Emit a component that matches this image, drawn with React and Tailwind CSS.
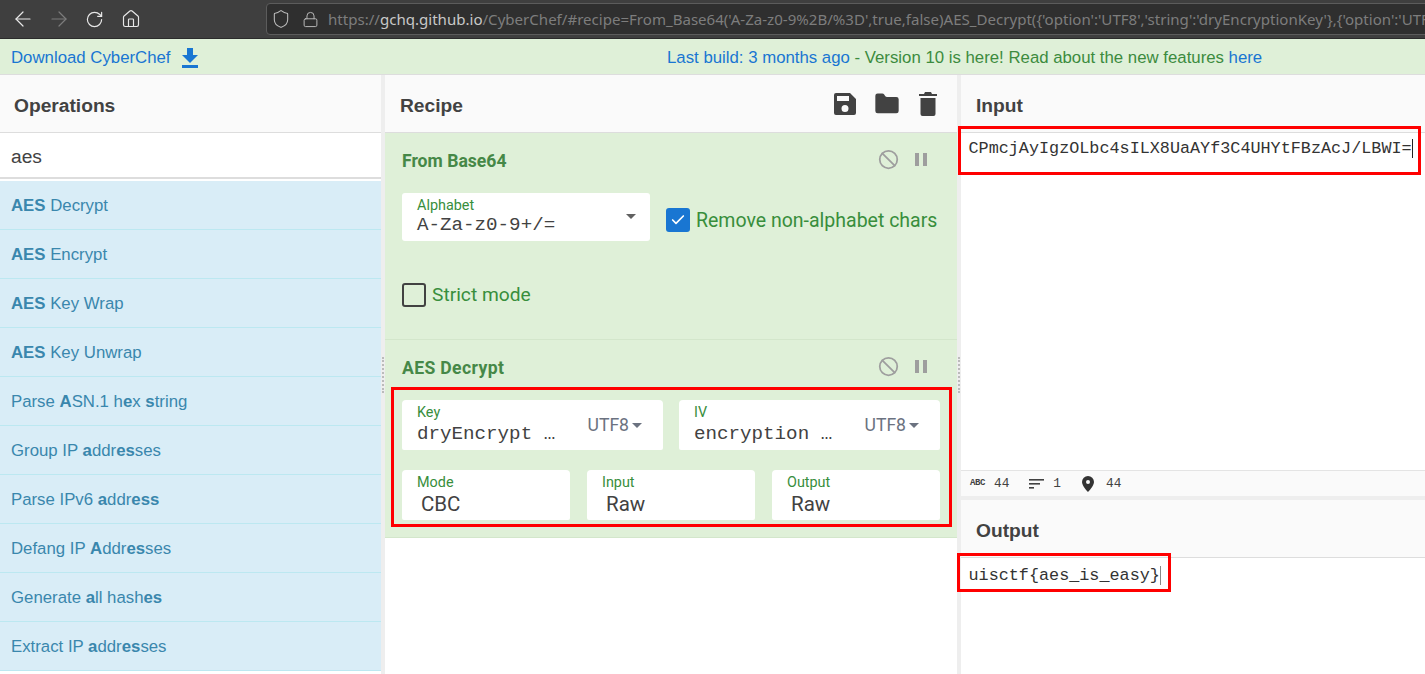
import { Folder, ArrowLeft, ArrowRight, RotateCw, Home, Shield, Lock, Check, Ban } from "lucide-react"

const operations = [
    [["AES", 1], [" Decrypt", 0]],
    [["AES", 1], [" Encrypt", 0]],
    [["AES", 1], [" Key Wrap", 0]],
    [["AES", 1], [" Key Unwrap", 0]],
    [["Parse ", 0], ["A", 1], ["SN.1 h", 0], ["e", 1], ["x ", 0], ["s", 1], ["tring", 0]],
    [["Group IP ", 0], ["a", 1], ["ddr", 0], ["es", 1], ["ses", 0]],
    [["Parse IPv6 ", 0], ["a", 1], ["ddr", 0], ["ess", 1]],
    [["Defang IP ", 0], ["A", 1], ["ddr", 0], ["es", 1], ["ses", 0]],
    [["Generate ", 0], ["a", 1], ["ll hash", 0], ["es", 1]],
    [["Extract IP ", 0], ["a", 1], ["ddr", 0], ["es", 1], ["ses", 0]],
]

const OpControls = () => (
    <div className="flex items-center gap-[16px] mr-[13px] -mt-[4px] text-[#9e9e9e]">
        <Ban size={21} strokeWidth={2} />
        <svg width="12" height="13" viewBox="0 0 12 13" fill="#9e9e9e">
            <rect x="0" y="0" width="4" height="13" />
            <rect x="8" y="0" width="4" height="13" />
        </svg>
    </div>
)

const Field = ({ label, value, mono, utf, className }) => (
    <div className={`relative h-[50px] bg-white rounded-t-[4px] rounded-b-[2px] pl-[15px] overflow-hidden ${className}`}>
        <div className="text-[14.4px] leading-[16px] pt-[5px] h-[20px] text-[#388e3c] font-['Roboto',sans-serif]">{label}</div>
        {mono ? (
            <div className="pt-[1px] text-[19.2px] leading-[26px] text-[#424242] font-['Liberation_Mono',monospace] whitespace-pre">{value}</div>
        ) : (
            <div className="pl-[4px] pt-[1px] text-[20.5px] leading-[26px] text-[#424242] font-['Roboto',sans-serif]">{value}</div>
        )}
        {utf && (
            <div className="absolute right-[21px] top-[15px] flex items-center gap-[3px] text-[17.6px] leading-[20px] text-[#6b7280] font-['Roboto',sans-serif]">
                UTF8
                <span className="w-0 h-0 border-x-[5px] border-x-transparent border-t-[5px] border-t-[#6b7280]" />
            </div>
        )}
    </div>
)

const App = () => {
    return (
        <div className="relative w-[1425px] h-[674px] overflow-hidden bg-white font-['Liberation_Sans',sans-serif]">
            {/* browser toolbar */}
            <div className="h-[39px] bg-[#3f3f3f] border-b border-[#2b2b2b] flex items-center pl-[11px] overflow-hidden">
                <ArrowLeft size={24} strokeWidth={1.2} className="text-[#e8e8e8] shrink-0" />
                <ArrowRight size={24} strokeWidth={1.2} className="text-[#7c7c7c] ml-[12px] shrink-0" />
                <RotateCw size={19} strokeWidth={1.5} className="text-[#e8e8e8] ml-[14px] shrink-0" />
                <Home size={20} strokeWidth={1.4} className="text-[#e8e8e8] ml-[17px] shrink-0" />
                <div className="ml-[125px] w-[1170px] h-[32px] shrink-0 rounded-[4px] bg-[#2f2f2f] border border-[#5c5c5c] flex items-center pl-[4px] whitespace-nowrap overflow-hidden text-[15.07px] font-['Noto_Sans',sans-serif]">
                    <Shield size={20} strokeWidth={1.3} className="text-[#b8b8b8] shrink-0" />
                    <Lock size={17} strokeWidth={1.4} className="text-[#b8b8b8] ml-[11px] shrink-0" />
                    <span className="ml-[9px] text-[#7d7d7d]">https://</span>
                    <span className="text-[#c8c8c8]">gchq.github.io</span>
                    <span className="text-[#7d7d7d]">/CyberChef/#recipe=From_Base64('A-Za-z0-9%2B/%3D',true,false)AES_Decrypt(&#123;'option':'UTF8','string':'dryEncryptionKey'&#125;,&#123;'option':'UTF8'</span>
                </div>
            </div>

            {/* banner */}
            <div className="h-[36px] bg-[#dff0d8] border-b border-[#dddddd] flex items-center pl-[11px] pt-[2px] text-[16.8px] relative">
                <span className="text-[#1976d2]">Download CyberChef</span>
                <svg width="16" height="20" viewBox="0 0 16 20" className="ml-[11px] text-[#1976d2]" fill="currentColor">
                    <path d="M5 0h6v7h5l-8 8-8-8h5z" />
                    <rect x="0" y="17" width="16" height="3" />
                </svg>
                <div className="absolute left-[667px] top-[9px] leading-[20px] whitespace-nowrap">
                    <span className="text-[#1976d2]">Last build: 3 months ago</span>
                    <span className="text-[#3c8b3e]"> - Version 10 is here! Read about the new features </span>
                    <span className="text-[#1976d2]">here</span>
                </div>
            </div>

            <div className="flex h-[599px] bg-[#eeeeee]">
                {/* operations */}
                <div className="w-[381px] shrink-0 bg-white overflow-hidden">
                    <div className="h-[58px] bg-[#fafafa] border-b border-[#dddddd] flex items-center pl-[14px] pt-[6px] text-[19.2px] font-bold text-[#424242]">
                        Operations
                    </div>
                    <div className="h-[46px] bg-white border-b-2 border-[#dddddd] flex items-center pl-[11px] pt-[4px] text-[19.2px] text-[#424242]">
                        aes
                    </div>
                    <div className="mt-[2px]">
                        {operations.map((parts, i) => (
                            <div key={i} className="h-[49px] bg-[#d9edf7] border-b border-[#bce8f1] flex items-center pl-[11px] pt-[2px] text-[16.8px] text-[#3a87ad] whitespace-pre">
                                {parts.map(([t, bold], j) => (
                                    <span key={j} className={bold ? "font-bold" : ""}>{t}</span>
                                ))}
                            </div>
                        ))}
                    </div>
                </div>

                {/* gutter */}
                <div className="w-[4px] shrink-0 flex items-center justify-center">
                    <div className="h-[36px] w-[2px] border-l-2 border-dotted border-[#bbbbbb]" />
                </div>

                {/* recipe */}
                <div className="w-[572px] shrink-0 bg-white">
                    <div className="h-[58px] bg-[#fafafa] border-b border-[#dddddd] flex items-center justify-between pl-[15px] pr-[20px] text-[19.2px] font-bold text-[#424242]">
                        <span className="pt-[6px]">Recipe</span>
                        <div className="flex items-center">
                            <svg width="24" height="24" viewBox="0 0 24 24" fill="#424242" className="mr-[16px]">
                                <path d="M17 1H3a2 2 0 0 0-2 2v18a2 2 0 0 0 2 2h18a2 2 0 0 0 2-2V7zm-5 19a3.5 3.5 0 1 1 0-7 3.5 3.5 0 0 1 0 7zm4-11H4V4h12z" />
                            </svg>
                            <Folder size={28} strokeWidth={0} fill="#424242" className="mr-[18px]" />
                            <svg width="18" height="24" viewBox="0 0 18 24" fill="#424242">
                                <path d="M1.500 6h15v16a2 2 0 0 1-2 2h-11a2 2 0 0 1-2-2zM0 2h5l1-2h6l1 2h5v2H0z" />
                            </svg>
                        </div>
                    </div>

                    <div className="h-[207px] bg-[#dff0d8] border-b border-[#d3e6cb] pl-[17px] pr-[17px] pt-[17px]">
                        <div className="flex items-center justify-between h-[22px] text-[#468847] text-[17.6px] font-bold font-['Roboto',sans-serif]">
                            <span className="pt-[1px]">From Base64</span>
                            <OpControls />
                        </div>
                        <div className="flex items-center mt-[21px]">
                            <div className="relative w-[248px] h-[48px] bg-white rounded-[3px] pl-[15px]">
                                <div className="text-[14.4px] leading-[16px] pt-[5px] h-[20px] text-[#388e3c] font-['Roboto',sans-serif]">Alphabet</div>
                                <div className="pt-[1px] text-[19.2px] leading-[22px] text-[#424242] font-['Liberation_Mono',monospace]">A-Za-z0-9+/=</div>
                                <span className="absolute right-[14px] top-[21px] w-0 h-0 border-x-[5px] border-x-transparent border-t-[5px] border-t-[#616161]" />
                            </div>
                            <div className="ml-[16px] mt-[6px] w-[24px] h-[24px] bg-[#1976d2] rounded-[3px] flex items-center justify-center">
                                <Check size={16} strokeWidth={2.5} className="text-white" />
                            </div>
                            <span className="ml-[6px] mt-[8px] text-[19.5px] text-[#388e3c] whitespace-nowrap font-['Roboto',sans-serif]">Remove non-alphabet chars</span>
                        </div>
                        <div className="flex items-center mt-[40px]">
                            <div className="w-[24px] h-[24px] border-2 border-[#424242] rounded-[3px]" />
                            <span className="ml-[6px] text-[19.2px] text-[#388e3c] font-['Roboto',sans-serif]">Strict mode</span>
                        </div>
                    </div>

                    <div className="h-[198px] bg-[#dff0d8] border-b border-[#d3e6cb] pl-[17px] pr-[17px] pt-[17px]">
                        <div className="flex items-center justify-between h-[22px] text-[#468847] text-[17.6px] font-bold font-['Roboto',sans-serif]">
                            <span className="pt-[1px] tracking-[0.35px]">AES Decrypt</span>
                            <OpControls />
                        </div>
                        <div className="flex gap-[16px] mt-[21px]">
                            <Field label="Key" value="dryEncrypt …" mono utf className="flex-1" />
                            <Field label="IV" value="encryption …" mono utf className="flex-1" />
                        </div>
                        <div className="flex gap-[17px] mt-[20px]">
                            <Field label="Mode" value="CBC" className="flex-1" />
                            <Field label="Input" value="Raw" className="flex-1" />
                            <Field label="Output" value="Raw" className="flex-1" />
                        </div>
                    </div>
                </div>

                {/* gutter */}
                <div className="w-[4px] shrink-0 flex items-center justify-center">
                    <div className="h-[36px] w-[2px] border-l-2 border-dotted border-[#bbbbbb]" />
                </div>

                {/* input / output */}
                <div className="flex-1 min-w-0 flex flex-col bg-white">
                    <div className="h-[58px] bg-[#fafafa] border-b border-[#dddddd] flex items-center pl-[15px] pt-[6px] text-[19.2px] font-bold text-[#424242]">
                        Input
                    </div>
                    <div className="h-[337px] pl-[7.5px] pt-[4px] text-[16.8px] leading-[24px] text-[#333333] font-['Liberation_Mono',monospace] whitespace-pre">
                        <span className="border-r border-[#222222]">CPmcjAyIgzOLbc4sILX8UaAYf3C4UHYtFBzAcJ/LBWI=</span>
                    </div>
                    <div className="h-[26px] bg-[#fafafa] border-t border-[#e4e4e4] flex items-center pl-[9px] text-[12.8px] text-[#424242] font-['Liberation_Mono',monospace]">
                        <span className="text-[9px] font-bold font-['Liberation_Mono',monospace] w-[15px] tracking-[-0.4px]">ABC</span>
                        <span className="ml-[9px]">44</span>
                        <svg width="16" height="14" viewBox="0 0 16 14" className="ml-[20px]" fill="#424242">
                            <rect x="0" y="2" width="15" height="1.6" />
                            <rect x="0" y="6" width="11" height="1.6" />
                            <rect x="0" y="10" width="5" height="1.6" />
                        </svg>
                        <span className="ml-[8px]">1</span>
                        <svg width="12" height="16" viewBox="0 0 12 16" className="ml-[21px]" fill="#333333">
                            <path fillRule="evenodd" d="M6 0a6 6 0 0 1 6 6c0 4-6 10-6 10S0 10 0 6a6 6 0 0 1 6-6zm0 4a2 2 0 1 0 0 4 2 2 0 0 0 0-4z" />
                        </svg>
                        <span className="ml-[12px]">44</span>
                    </div>
                    <div className="h-[4px] bg-[#eeeeee]" />
                    <div className="h-[58px] bg-[#fafafa] border-b border-[#dddddd] flex items-center pl-[15px] pt-[6px] text-[19.2px] font-bold text-[#424242]">
                        Output
                    </div>
                    <div className="pl-[7.5px] pt-[6px] text-[16.8px] leading-[24px] text-[#333333] font-['Liberation_Mono',monospace] whitespace-pre">
                        <span className="border-r border-[#888888]">uisctf&#123;aes_is_easy&#125;</span>
                    </div>
                </div>
            </div>

            {/* red annotation boxes drawn over the screenshot */}
            <div className="absolute left-[958px] top-[126px] w-[463px] h-[49px] border-[3px] border-[#ff0000]" />
            <div className="absolute left-[391px] top-[387px] w-[561px] h-[140px] border-[3px] border-[#ff0000]" />
            <div className="absolute left-[957px] top-[553px] w-[214px] h-[39px] border-[3px] border-[#ff0000]" />
        </div>
    )
}

export default App
